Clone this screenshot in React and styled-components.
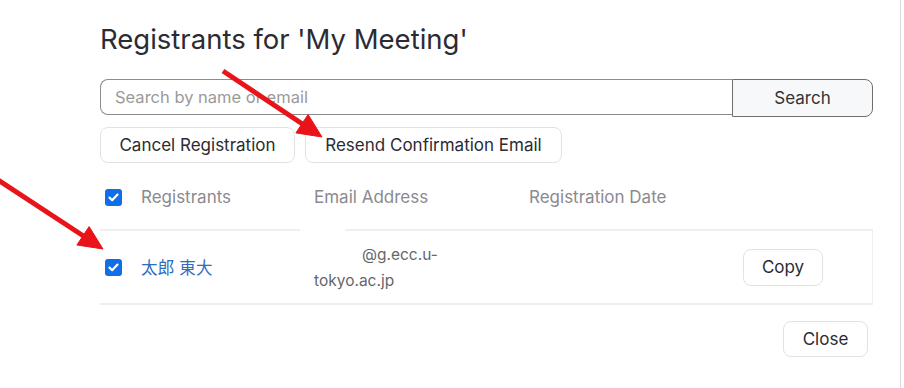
import React from 'react'
import styled, { createGlobalStyle } from 'styled-components'

const GlobalStyle = createGlobalStyle`
    body{
        margin:0;
        background:#fff;
        font-family:Inter,"Noto Sans CJK JP",sans-serif;
    }`
const Page = styled.div`
    position:relative;
    width:904px;
    height:388px;
    overflow:hidden;`
const Modal = styled.div`
    width:901px;
    height:388px;
    box-sizing:border-box;
    border-right:1px solid #dcdcdc;
    padding:23px 27px 0 100px;`
const Title = styled.h2`
    margin:0;
    font-size:27.5px;
    line-height:32px;
    font-weight:400;
    color:#2b2b33;`
const SearchRow = styled.div`
    display:flex;
    margin-top:24px;
    height:38px;`
const SearchInput = styled.input`
    flex:1;
    height:36px;
    box-sizing:border-box;
    border:1.5px solid #8c8c8c;
    border-right:none;
    border-radius:8px 0 0 8px;
    padding:0 14px;
    font-family:inherit;
    font-size:16.5px;
    outline:none;
    &::placeholder{color:#9a9a9a;}`
const SearchButton = styled.button`
    width:141px;
    height:38px;
    box-sizing:border-box;
    border:1.5px solid #6f6f6f;
    border-radius:0 8px 8px 0;
    background:#f7f8fa;
    font-family:inherit;
    font-size:17px;
    color:#333;`
const ButtonRow = styled.div`
    display:flex;
    gap:10px;
    margin-top:10px;`
const Button = styled.button`
    height:${props => props.tall ? "37px" : "36px"};
    width:${props => props.w};
    box-sizing:border-box;
    border:1px solid #e2e2e2;
    border-radius:8px;
    background:#fff;
    font-family:inherit;
    font-size:17px;
    color:#2b2b33;
    padding:0;`
const Grid = styled.div`
    display:grid;
    grid-template-columns:41px 173px 215px 1fr;
    align-items:center;`
const HeaderRow = styled(Grid)`
    padding:16px 0 14px;
    height:36px;
    font-size:17px;
    color:#8a8a8f;`
const DataRow = styled(Grid)`
    position:relative;
    height:76px;
    box-sizing:border-box;
    border-top:2px solid #efefef;
    border-bottom:2px solid #efefef;
    border-right:1px solid #efefef;
    font-size:15.5px;`
const Redact = styled.div`
    position:absolute;
    left:200px;
    top:-3px;
    width:45px;
    height:24px;
    background:#fff;`
const Box = styled.span`
    display:flex;
    align-items:center;
    justify-content:center;
    width:17px;
    height:17px;
    margin-left:5px;
    border-radius:3px;
    background:#0e6fe8;`
const Name = styled.span`
    color:#2d6cc0;
    font-size:16.5px;
    letter-spacing:0.2px;`
const Email = styled.div`
    width:134px;
    line-height:26px;
    color:#66666b;
    padding-top:2px;`
const Hidden = styled.span`
    display:inline-block;
    width:48px;`
const CopyCell = styled.div`
    display:flex;
    justify-content:flex-end;
    padding-right:49px;`
const Footer = styled.div`
    display:flex;
    justify-content:flex-end;
    padding-right:5px;
    margin-top:16px;`
const Arrows = styled.svg`
    position:absolute;
    left:0;
    top:0;
    pointer-events:none;`

const Check = () => (
    <Box>
        <svg width="11" height="9" viewBox="0 0 11 9">
            <path d="M1.5 4.6 L4.2 7.2 L9.5 1.6" fill="none" stroke="#fff" strokeWidth="2.2" strokeLinecap="round" strokeLinejoin="round" />
        </svg>
    </Box>
)

export default function App() {
    return (
        <Page>
            <GlobalStyle />
            <Modal>
                <Title>Registrants for 'My Meeting'</Title>
                <SearchRow>
                    <SearchInput placeholder="Search by name or email" />
                    <SearchButton>Search</SearchButton>
                </SearchRow>
                <ButtonRow>
                    <Button w="195px">Cancel Registration</Button>
                    <Button w="257px">Resend Confirmation Email</Button>
                </ButtonRow>
                <HeaderRow>
                    <Check />
                    <span>Registrants</span>
                    <span>Email Address</span>
                    <span>Registration Date</span>
                </HeaderRow>
                <DataRow>
                    <Redact />
                    <Check />
                    <Name>太郎 東大</Name>
                    <Email><Hidden />@g.ecc.u-tokyo.ac.jp</Email>
                    <CopyCell><Button w="80px" tall>Copy</Button></CopyCell>
                </DataRow>
                <Footer>
                    <Button w="85px">Close</Button>
                </Footer>
            </Modal>
            <Arrows width="904" height="388">
                <g fill="#e8141a" stroke="#e8141a">
                    <line x1="223" y1="71" x2="304" y2="125" strokeWidth="5" />
                    <polygon points="322,137 295.9,132.9 308.1,114.5" strokeWidth="1" />
                    <line x1="-2" y1="180" x2="85" y2="237" strokeWidth="5" />
                    <polygon points="103,249 76.9,245 89.1,226.6" strokeWidth="1" />
                </g>
            </Arrows>
        </Page>
    )
}
